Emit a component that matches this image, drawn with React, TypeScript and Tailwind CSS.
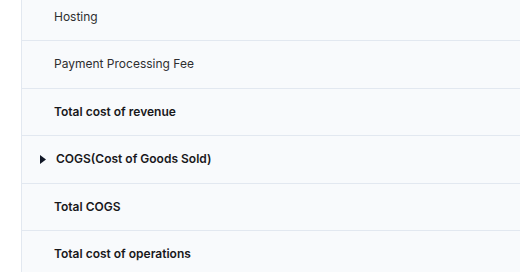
const rows: { label: string; bold?: boolean; toggle?: boolean }[] = [
  { label: 'Hosting' },
  { label: 'Payment Processing Fee' },
  { label: 'Total cost of revenue', bold: true },
  { label: 'COGS(Cost of Goods Sold)', bold: true, toggle: true },
  { label: 'Total COGS', bold: true },
  { label: 'Total cost of operations', bold: true },
];

function Row({ label, bold, toggle }: { label: string; bold?: boolean; toggle?: boolean }) {
  return (
    <div className="flex h-[47.5px] items-center border-b border-[#e2e8f0] pl-[32px]">
      {toggle ? (
        <span className="-ml-[14px] mr-[10px] flex w-[6px] items-center">
          <svg width="6" height="9" viewBox="0 0 6 9">
            <path d="M0 0 L6 4.5 L0 9 Z" fill="#111827" />
          </svg>
        </span>
      ) : null}
      <span className={`text-[12px] ${bold ? 'font-semibold text-[#18181b]' : 'text-[#2e2e30]'}`}>{label}</span>
    </div>
  );
}

export default function App() {
  return (
    <div
      className="h-[272px] w-[520px] overflow-hidden bg-white pl-[21px]"
      style={{ fontFamily: 'Inter, "Noto Sans", sans-serif' }}
    >
      <div className="-mt-[6.5px] min-h-[300px] border-l border-[#e2e8f0] bg-[#f8fafc]">
        {rows.map((r) => (
          <Row key={r.label} {...r} />
        ))}
      </div>
    </div>
  );
}
